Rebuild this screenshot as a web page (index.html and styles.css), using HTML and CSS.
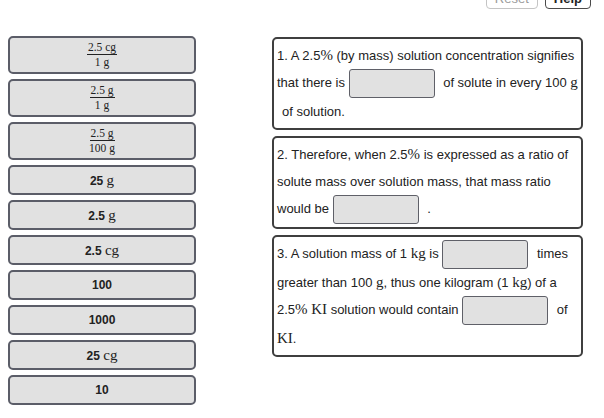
FILE: index.html
```html
<!DOCTYPE html>
<html lang="en">
<head>
  <meta charset="UTF-8">
  <meta name="viewport" content="width=device-width, initial-scale=1.0">
  <title>Solution Concentration</title>
  <link rel="stylesheet" href="styles.css">
</head>
<body>

  <div class="toolbar">
    <button class="tool-btn reset">Reset</button>
    <button class="tool-btn help">Help</button>
  </div>

  <div class="workspace">
    <div class="tiles">
      <div class="tile tile-frac">
        <span class="frac"><span class="num">2.5 cg</span><span class="den">1 g</span></span>
      </div>
      <div class="tile tile-frac">
        <span class="frac"><span class="num">2.5 g</span><span class="den">1 g</span></span>
      </div>
      <div class="tile tile-frac">
        <span class="frac"><span class="num">2.5 g</span><span class="den">100 g</span></span>
      </div>
      <div class="tile"><span>25 <span class="unit">g</span></span></div>
      <div class="tile"><span>2.5 <span class="unit">g</span></span></div>
      <div class="tile"><span>2.5 <span class="unit">cg</span></span></div>
      <div class="tile"><span>100</span></div>
      <div class="tile"><span>1000</span></div>
      <div class="tile"><span>25 <span class="unit">cg</span></span></div>
      <div class="tile"><span>10</span></div>
    </div>

    <div class="questions">
      <div class="panel">
        1. A 2.5<span class="math">%</span> (by mass) solution concentration signifies
        that there is <span class="drop"></span> of solute in every <span class="nowrap">100 <span class="math">g</span></span>
        <span class="indent">of solution.</span>
      </div>
      <div class="panel">
        2. Therefore, when 2.5<span class="math">%</span> is expressed as a ratio of
        solute mass over solution mass, that mass ratio
        would be <span class="drop"></span> .
      </div>
      <div class="panel">
        3. A solution mass of 1 <span class="math">kg</span> is <span class="drop"></span> times
        greater than 100 <span class="math">g</span>, thus one kilogram (1 <span class="math">kg</span>) of a
        2.5<span class="math">%</span> <span class="math">KI</span> solution would contain <span class="drop"></span> of
        <span class="math">KI</span>.
      </div>
    </div>
  </div>

</body>
</html>
```

FILE: styles.css
```css
body {
  margin: 0;
  font-family: "Liberation Sans", Arial, sans-serif;
  background: #fff;
  color: #222;
  overflow: hidden;
}

.toolbar {
  display: flex;
  justify-content: flex-end;
  gap: 7px;
  padding-right: 13px;
  margin-top: -12px;
}

.tool-btn {
  height: 21px;
  padding: 0 8px;
  font-family: "Liberation Sans", Arial, sans-serif;
  font-size: 13px;
  background: #fff;
  border-radius: 4px;
  cursor: pointer;
}

.reset {
  border: 1px solid #c4c4c4;
  color: #9a9a9a;
}

.help {
  border: 1.5px solid #4a4a4a;
  color: #222;
  font-weight: bold;
}

.workspace {
  display: flex;
  align-items: flex-start;
  gap: 76px;
  padding-left: 8px;
  margin-top: 27px;
}

.tiles {
  width: 188px;
  display: flex;
  flex-direction: column;
  gap: 5px;
}

.tile {
  height: 30px;
  box-sizing: border-box;
  border: 2px solid #5b5d68;
  border-radius: 5px;
  background-color: #e1e1e1;
  display: flex;
  justify-content: center;
  align-items: center;
  font-size: 12px;
  font-weight: bold;
  color: #222;
}

.tile-frac {
  height: 38px;
  font-weight: normal;
}

.unit {
  font-family: "Liberation Serif", "Times New Roman", serif;
  font-weight: normal;
  font-size: 15px;
}

.frac {
  display: inline-flex;
  flex-direction: column;
  align-items: center;
  font-family: "Liberation Serif", "Times New Roman", serif;
  font-size: 11.5px;
  line-height: 12px;
  margin-top: -1px;
}

.frac .num {
  padding: 0 1px 1px;
  border-bottom: 1.5px solid #222;
}

.frac .den {
  padding-top: 1px;
}

.questions {
  width: 311px;
  display: flex;
  flex-direction: column;
  gap: 6px;
  margin-top: 1px;
}

.panel {
  box-sizing: border-box;
  border: 2px solid #3f3f3f;
  border-radius: 5px;
  padding: 3px;
  font-size: 13px;
  line-height: 27px;
  color: #222;
}

.math {
  font-family: "Liberation Serif", "Times New Roman", serif;
  font-size: 15px;
}

.nowrap {
  white-space: nowrap;
}

.drop {
  display: inline-block;
  width: 86px;
  height: 29px;
  box-sizing: border-box;
  border: 1.5px solid #5f6068;
  border-radius: 3px;
  background-color: #e1e1e1;
  vertical-align: middle;
  margin: 0 5px 0 0;
}

.indent {
  margin-left: 5px;
}
```
